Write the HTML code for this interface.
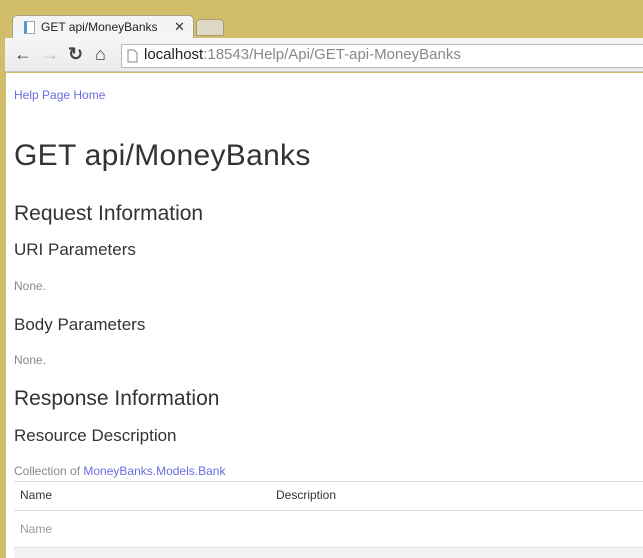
<!DOCTYPE html>
<html><head><style>
*{margin:0;padding:0;box-sizing:border-box}
body{width:643px;height:558px;overflow:hidden;background:#d2bd6a;font-family:"Liberation Sans",sans-serif;position:relative}
.tab{position:absolute;left:12px;top:15px;width:182px;height:25px;background:#f4f4f4;border:1px solid #a8a08a;border-bottom:none;border-radius:5px 5px 0 0}
.tab2{position:absolute;left:196px;top:19px;width:28px;height:17px;background:#ddd7c4;border:1px solid #a89c70;border-radius:4px 4px 0 0}
.tabtxt{position:absolute;left:41px;top:20px;font-size:12px;color:#222}
.x{position:absolute;left:174px;top:19px;font-size:13px;color:#333}
.fav{position:absolute;left:24px;top:21px;width:11px;height:13px;border:1px solid #9ab;background:#fff;border-left:3px solid #59c}
.tool{position:absolute;left:5px;top:38px;right:0;height:34px;background:linear-gradient(#f6f6f6,#ebebeb);border-bottom:1px solid #c8c8c8}
.url{position:absolute;left:121px;top:44px;right:-5px;height:24px;background:#fff;border:1px solid #b8b8b8;border-radius:2px}
.urltxt{position:absolute;left:144px;top:46px;font-size:15px;color:#888}
.urltxt b{font-weight:normal;color:#222}
.nav{position:absolute;top:44px;font-size:18px;font-weight:bold;color:#444}
.content{position:absolute;left:6px;top:73px;right:0;bottom:0;background:#fff;font-family:"Liberation Sans",sans-serif}
.t{position:absolute;left:8px;color:#333;white-space:nowrap}
a{color:#6b6be0;text-decoration:none}
</style></head><body>
<div class="tab"></div><div class="tab2"></div>
<div class="fav"></div>
<div class="tabtxt">GET api/MoneyBanks</div>
<div class="x">✕</div>
<div class="tool"></div>
<div class="nav" style="left:14px">←</div>
<div class="nav" style="left:41px;color:#bbb">→</div>
<div class="nav" style="left:68px">↻</div>
<div class="nav" style="left:95px">⌂</div>
<div class="url"></div>
<svg style="position:absolute;left:127px;top:49px" width="11" height="14"><path d="M1 1h6l3 3v9H1z" fill="#fff" stroke="#888"/></svg>
<div class="urltxt"><b>localhost</b>:18543/Help/Api/GET-api-MoneyBanks</div>
<div class="content">
<div class="t" style="top:15px;font-size:12px"><a>Help Page Home</a></div>
<div class="t" style="top:66px;font-size:30px;font-weight:300;letter-spacing:0.3px">GET api/MoneyBanks</div>
<div class="t" style="top:129px;font-size:21px">Request Information</div>
<div class="t" style="top:167px;font-size:17px">URI Parameters</div>
<div class="t" style="top:206px;font-size:12px;color:#888">None.</div>
<div class="t" style="top:242px;font-size:17px">Body Parameters</div>
<div class="t" style="top:280px;font-size:12px;color:#888">None.</div>
<div class="t" style="top:314px;font-size:21px">Response Information</div>
<div class="t" style="top:353px;font-size:17px">Resource Description</div>
<div class="t" style="top:391px;font-size:12px;color:#888">Collection of <a>MoneyBanks.Models.Bank</a></div>
<div style="position:absolute;left:8px;right:0;top:408px;border-top:1px solid #ddd"></div>
<div class="t" style="top:415px;font-size:12px;left:14px">Name</div>
<div class="t" style="top:415px;font-size:12px;left:270px">Description</div>
<div style="position:absolute;left:8px;right:0;top:437px;border-top:1px solid #ddd"></div>
<div class="t" style="top:449px;font-size:12px;left:14px;color:#999">Name</div>
<div style="position:absolute;left:8px;right:0;top:474px;bottom:0;border-top:1px solid #ddd;background:#f2f2f2"></div>
</div>
</body></html>
